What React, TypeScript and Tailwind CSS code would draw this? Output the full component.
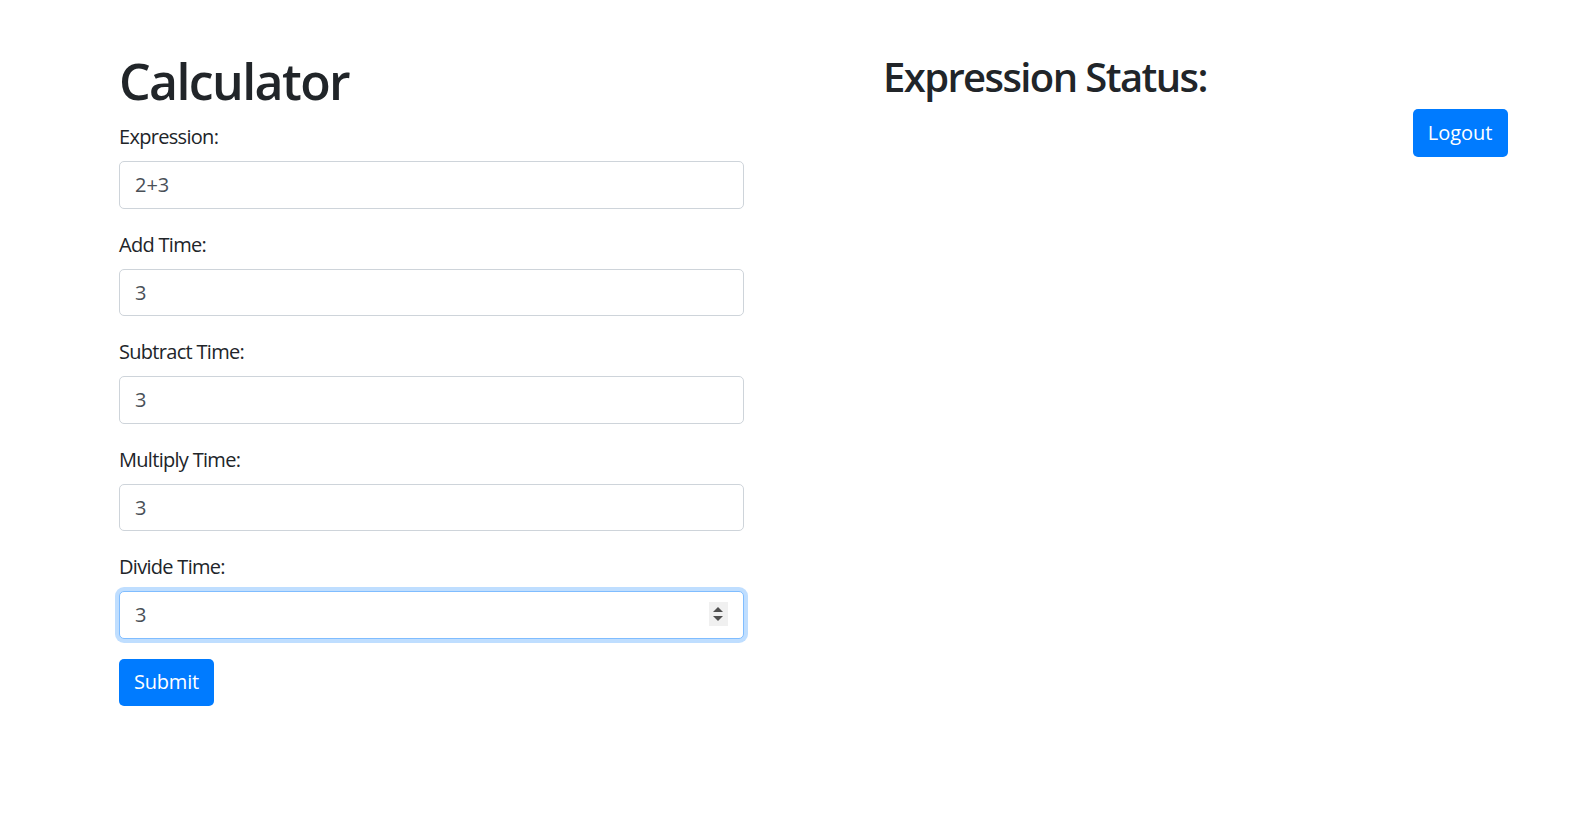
import React, { useState } from "react";

const fields = [
    { key: "expression", label: "Expression:", value: "2+3", type: "text" },
    { key: "add", label: "Add Time:", value: "3", type: "number" },
    { key: "subtract", label: "Subtract Time:", value: "3", type: "number" },
    { key: "multiply", label: "Multiply Time:", value: "3", type: "number" },
    { key: "divide", label: "Divide Time:", value: "3", type: "number", focused: true },
];

export default function App() {
    const [values, setValues] = useState<Record<string, string>>(
        Object.fromEntries(fields.map((f) => [f.key, f.value]))
    );

    return (
        <div className="min-h-[821px] bg-white font-['Open_Sans',sans-serif] text-[#212529]">
            <div className="flex pl-[119px] pt-[51px]">
                {/* left: calculator form */}
                <div className="w-[624.5px] shrink-0">
                    <h1 className="mb-[10px] text-[50px] font-[550] leading-[60px] tracking-[-1.6px]">Calculator</h1>
                    <form onSubmit={(e) => e.preventDefault()}>
                        {fields.map((f) => (
                            <div key={f.key} className="mb-[20px]">
                                <label className="mb-[9px] block pt-[1px] text-[20px] leading-[30px] tracking-[-0.7px]">{f.label}</label>
                                <div className="relative">
                                    <input
                                        type="text"
                                        value={values[f.key]}
                                        onChange={(e) => setValues({ ...values, [f.key]: e.target.value })}
                                        className={`block h-[47.5px] w-full rounded-[5px] border bg-white px-[15px] text-[20px] leading-[30px] text-[#495057] outline-none ${f.focused ? "border-[#80bdff] shadow-[0_0_0_4px_rgba(0,123,255,0.25)]" : "border-[#ced4da]"}`}
                                    />
                                    {f.focused && <Spinner />}
                                </div>
                            </div>
                        ))}
                        <button type="submit" className="h-[47.5px] rounded-[5px] bg-[#007bff] px-[15px] text-[20px] leading-[30px] tracking-[-0.2px] text-white">
                            Submit
                        </button>
                    </form>
                </div>

                {/* right: status */}
                <div className="ml-[139.5px] flex w-[624.5px] shrink-0 flex-col">
                    <h2 className="mb-[8px] mt-[2px] text-[40px] font-[550] leading-[48px] tracking-[-1.6px]">Expression Status:</h2>
                    <div className="flex justify-end">
                        <button className="h-[47.5px] rounded-[5px] bg-[#007bff] px-[15px] text-[20px] leading-[30px] text-white">Logout</button>
                    </div>
                </div>
            </div>
        </div>
    );
}

function Spinner() {
    return (
        <div className="absolute right-[16px] top-[11px] flex h-[24px] w-[19px] flex-col items-center justify-center gap-[4px] bg-[#f0f0f0]">
            <svg width="10" height="5" viewBox="0 0 10 5"><path d="M5 0 L10 5 L0 5 Z" fill="#505050" /></svg>
            <svg width="10" height="5" viewBox="0 0 10 5"><path d="M0 0 L10 0 L5 5 Z" fill="#505050" /></svg>
        </div>
    );
}
